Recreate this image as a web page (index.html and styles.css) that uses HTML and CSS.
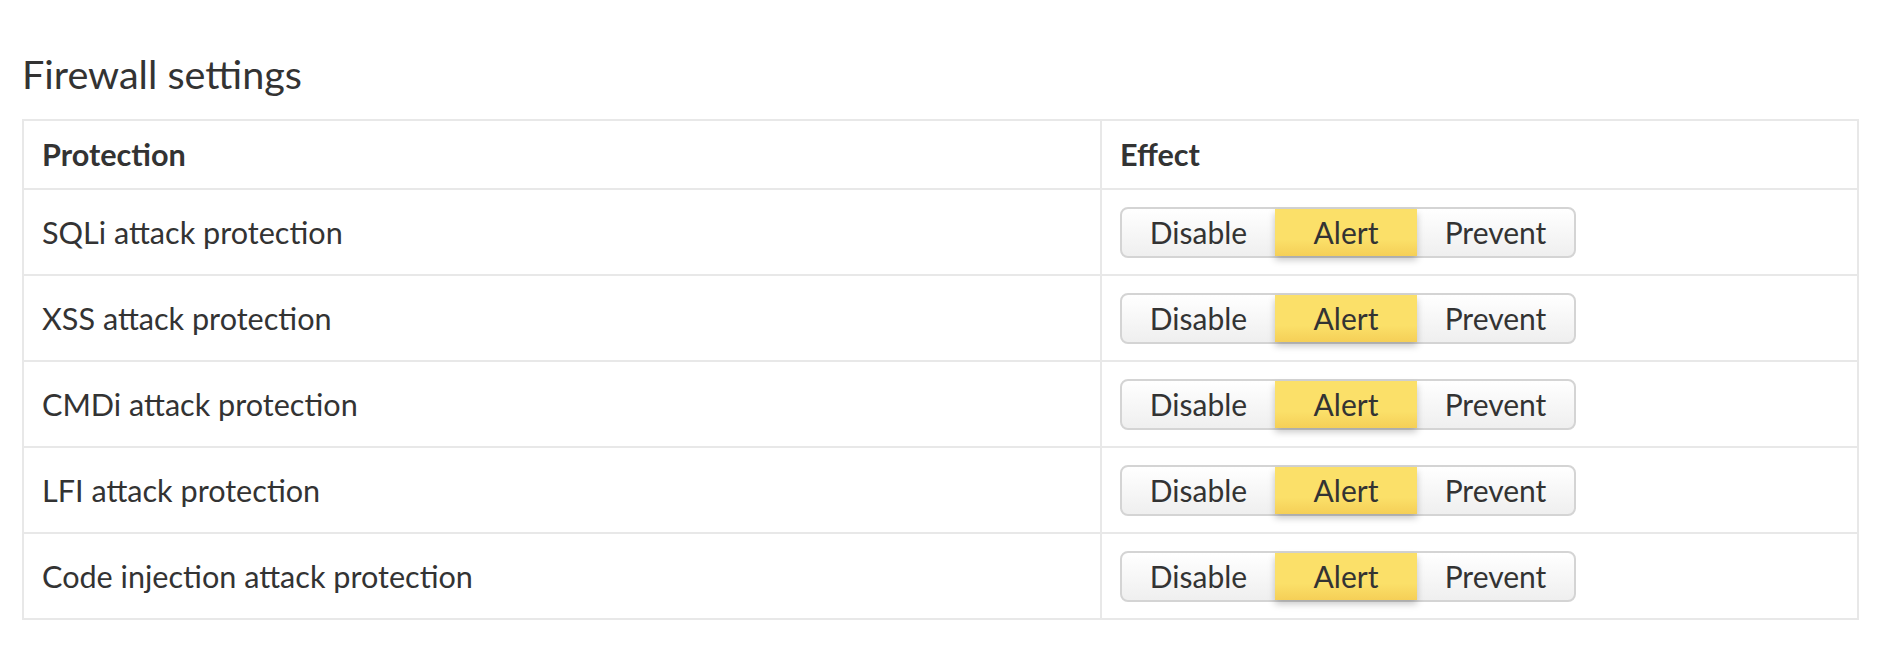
FILE: index.html
```html
<!DOCTYPE html>
<html lang="en">
<head>
<meta charset="utf-8">
<title>Firewall settings</title>
<link rel="stylesheet" href="styles.css">
</head>
<body>
<main class="page">
  <h2 class="title">Firewall settings</h2>
  <table class="settings">
    <colgroup>
      <col class="col-protection">
      <col class="col-effect">
    </colgroup>
    <thead>
      <tr>
        <th>Protection</th>
        <th>Effect</th>
      </tr>
    </thead>
    <tbody>
      <tr>
        <td class="name">SQLi attack protection</td>
        <td class="effect"><div class="seg"><span class="seg-btn">Disable</span><span class="seg-btn active">Alert</span><span class="seg-btn">Prevent</span></div></td>
      </tr>
      <tr>
        <td class="name">XSS attack protection</td>
        <td class="effect"><div class="seg"><span class="seg-btn">Disable</span><span class="seg-btn active">Alert</span><span class="seg-btn">Prevent</span></div></td>
      </tr>
      <tr>
        <td class="name">CMDi attack protection</td>
        <td class="effect"><div class="seg"><span class="seg-btn">Disable</span><span class="seg-btn active">Alert</span><span class="seg-btn">Prevent</span></div></td>
      </tr>
      <tr>
        <td class="name">LFI attack protection</td>
        <td class="effect"><div class="seg"><span class="seg-btn">Disable</span><span class="seg-btn active">Alert</span><span class="seg-btn">Prevent</span></div></td>
      </tr>
      <tr>
        <td class="name">Code injection attack protection</td>
        <td class="effect"><div class="seg"><span class="seg-btn">Disable</span><span class="seg-btn active">Alert</span><span class="seg-btn">Prevent</span></div></td>
      </tr>
    </tbody>
  </table>
</main>
</body>
</html>
```

FILE: styles.css
```css
html, body {
  margin: 0;
  padding: 0;
  background: #ffffff;
}

body {
  font-family: Lato, "Open Sans", sans-serif;
  color: #333333;
}

.page {
  padding: 50px 43px 0 22px;
}

.title {
  margin: 0;
  font-size: 39.6px;
  font-weight: 400;
  line-height: 47px;
  color: #333333;
}

.settings {
  margin-top: 22px;
  width: 1837px;
  border-collapse: collapse;
  border: 2px solid #e8e8e8;
  font-size: 30.6px;
}

.col-protection {
  width: 1078px;
}

.settings th,
.settings td {
  border: 2px solid #e8e8e8;
  text-align: left;
  padding: 0 18px;
  line-height: 34px;
  vertical-align: middle;
}

.settings th {
  font-weight: 700;
  padding-top: 17px;
  padding-bottom: 16px;
  height: 34px;
}

.settings td.name {
  padding-top: 2px;
  height: 82px;
}

.settings td.effect {
  height: 84px;
}

.seg {
  display: inline-flex;
  vertical-align: middle;
  height: 51px;
  box-sizing: border-box;
  border: 2px solid #d4d4d4;
  border-radius: 8px;
  background: linear-gradient(#ffffff, #efefef);
  font-size: 30px;
}

.seg-btn {
  display: flex;
  align-items: center;
  justify-content: center;
  color: #333333;
}

.seg-btn:first-child {
  width: 153px;
}

.seg-btn.active {
  width: 142px;
  background: linear-gradient(#fbe069 0%, #fbe069 65%, #f5cf57 100%);
  box-shadow: 0 4px 7px rgba(0, 0, 0, 0.22);
  position: relative;
}

.seg-btn:last-child {
  width: 157px;
}
```
